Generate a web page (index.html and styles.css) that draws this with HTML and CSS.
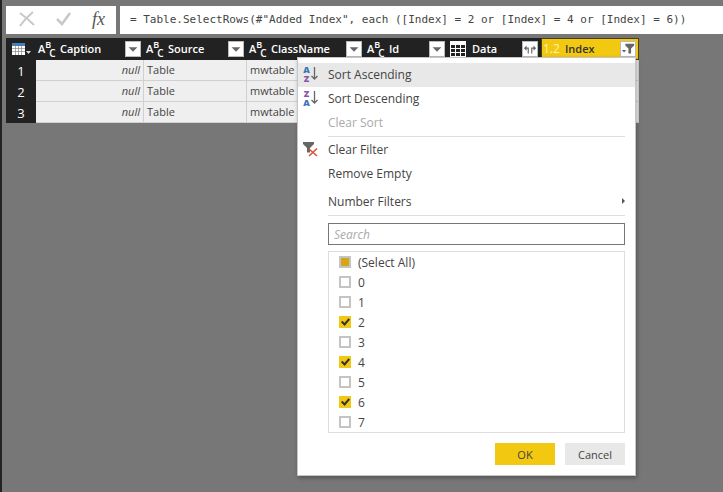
FILE: index.html
```html
<!DOCTYPE html>
<html lang="en">
<head>
  <meta charset="UTF-8" />
  <meta name="viewport" content="width=device-width, initial-scale=1" />
  <title>Query Editor</title>
  <link rel="stylesheet" href="styles.css">
</head>
<body>
  <!-- Shared icons -->
  <svg class="defs" width="0" height="0" aria-hidden="true">
    <symbol id="icon-arrow" viewBox="0 0 16 16">
      <path d="M3 6h10l-5 5z" fill="#666" />
    </symbol>
    <symbol id="icon-down" viewBox="0 0 7 18">
      <path d="M3.500 2v12M0.500 11l3 3 3-3" />
    </symbol>
  </svg>

  <div class="formula-bar">
    <div class="formula-actions">
      <button aria-label="Cancel formula">
        <svg width="16" height="16" viewBox="0 0 16 16"><path d="M1 2C5 5 10 9 15 14M14 1C9 5 5 9 1 15" fill="none" stroke="#c8c8c8" stroke-width="2" /></svg>
      </button>
      <button aria-label="Apply formula">
        <svg width="16" height="16" viewBox="0 0 16 16"><path d="M1 8l5 5L14 2" fill="none" stroke="#c8c8c8" stroke-width="2.6" /></svg>
      </button>
      <button class="fx" aria-label="Insert function">fx</button>
    </div>
    <input class="formula" type="text" aria-label="Formula" value="= Table.SelectRows(#&quot;Added Index&quot;, each ([Index] = 2 or [Index] = 4 or [Index] = 6))">
  </div>

  <div class="grid">
    <table>
      <colgroup>
        <col class="c-num"><col class="c-caption"><col class="c-source"><col class="c-class"><col class="c-id"><col class="c-data"><col class="c-index">
      </colgroup>
      <thead>
        <tr>
          <th>
            <button class="corner" aria-label="Table menu">
              <svg width="20" height="14" viewBox="0 0 20 14">
                <path d="M0 1h13v12H0z" fill="#fff" />
                <path d="M0 1h13v3H0z" fill="#4a7ebb" />
                <path d="M0 6.5h13M0 9.5h13M3.5 4v9M6.5 4v9M9.5 4v9" stroke="#8a8a8a" stroke-width="0.7" />
                <path d="M14 9h5l-2.500 3z" fill="#ddd" />
              </svg>
            </button>
          </th>
          <th><div class="head"><div class="type"><i>A</i><i>B</i><i>C</i></div><span>Caption</span><button class="drop" aria-label="Filter Caption"><svg><use href="#icon-arrow" /></svg></button></div></th>
          <th><div class="head"><div class="type"><i>A</i><i>B</i><i>C</i></div><span>Source</span><button class="drop" aria-label="Filter Source"><svg><use href="#icon-arrow" /></svg></button></div></th>
          <th><div class="head"><div class="type"><i>A</i><i>B</i><i>C</i></div><span>ClassName</span><button class="drop" aria-label="Filter ClassName"><svg><use href="#icon-arrow" /></svg></button></div></th>
          <th><div class="head"><div class="type"><i>A</i><i>B</i><i>C</i></div><span>Id</span><button class="drop" aria-label="Filter Id"><svg><use href="#icon-arrow" /></svg></button></div></th>
          <th>
            <div class="head">
              <svg class="type" viewBox="0 0 17 18"><path d="M0 1h16v16H0z" fill="#fff" /><path d="M1 5h4v3H1zM6 5h4v3H6zM11 5h4v3h-4zM1 9h4v3H1zM6 9h4v3H6zM11 9h4v3h-4zM1 13h4v3H1zM6 13h4v3H6zM11 13h4v3h-4z" fill="#222" /></svg>
              <span>Data</span>
              <button class="drop" aria-label="Expand Data">
                <svg viewBox="0 0 16 16"><path d="M3 7h3v6M13 7h-3v6" fill="none" stroke="#666" stroke-width="1.300" /><path d="M1 7l3-3v6zM15 7l-3-3v6z" fill="#666" /></svg>
              </button>
            </div>
          </th>
          <th class="active">
            <div class="head">
              <b class="decimal">1.2</b>
              <span>Index</span>
              <button class="drop" aria-label="Filter Index">
                <svg viewBox="0 0 16 16"><path d="M5 2h10v2l-3.500 3.500V13H8.500V7.500L5 4z" fill="#666" /><path d="M1 9h5l-2.500 3z" fill="#666" /></svg>
              </button>
            </div>
          </th>
        </tr>
      </thead>
      <tbody>
        <tr><th>1</th><td class="null">null</td><td>Table</td><td>mwtable</td><td></td><td></td><td></td></tr>
        <tr><th>2</th><td class="null">null</td><td>Table</td><td>mwtable</td><td></td><td></td><td></td></tr>
        <tr><th>3</th><td class="null">null</td><td>Table</td><td>mwtable</td><td></td><td></td><td></td></tr>
      </tbody>
    </table>

    <!-- Filter menu of the Index column -->
    <form class="menu">
      <button type="button" class="item hover">
        <span class="icon"><span class="az"><b class="a">A</b><b class="z">Z</b></span><svg width="7" height="18"><use href="#icon-down" /></svg></span>
        Sort Ascending
      </button>
      <button type="button" class="item">
        <span class="icon"><span class="az"><b class="z">Z</b><b class="a">A</b></span><svg width="7" height="18"><use href="#icon-down" /></svg></span>
        Sort Descending
      </button>
      <button type="button" class="item" disabled><span class="icon"></span>Clear Sort</button>
      <hr>
      <button type="button" class="item">
        <span class="icon"><svg width="16" height="18" viewBox="0 0 16 18"><path d="M0 2h11v2L7 8v4.500H4V8L0 4z" class="funnel" /><path d="M6 9l8 7M14 8.500L6 16" class="cross" /></svg></span>
        Clear Filter
      </button>
      <button type="button" class="item"><span class="icon"></span>Remove Empty</button>
      <button type="button" class="item sub"><span class="icon"></span>Number Filters <i></i></button>
      <hr>
      <div class="filter">
        <input class="search" type="text" placeholder="Search" aria-label="Search">
        <div class="values">
          <label><input type="checkbox" class="some">(Select All)</label>
          <label><input type="checkbox">0</label>
          <label><input type="checkbox">1</label>
          <label><input type="checkbox" checked>2</label>
          <label><input type="checkbox">3</label>
          <label><input type="checkbox" checked>4</label>
          <label><input type="checkbox">5</label>
          <label><input type="checkbox" checked>6</label>
          <label><input type="checkbox">7</label>
        </div>
        <div class="buttons">
          <button type="button" class="ok">OK</button>
          <button type="button">Cancel</button>
        </div>
      </div>
    </form>
  </div>

  <script>
    document.querySelector('.some').indeterminate = true;
  </script>
</body>
</html>
```
FILE: styles.css
```css
* {
  box-sizing: border-box;
}
body {
  margin: 0;
  min-height: 100vh;
  padding: 6px 0 0 4px;
  background: #777;
  border-left: 2px solid #222;
  color: #444;
  font-family: 'Open Sans', 'Noto Sans', sans-serif;
  font-size: 12px;
  overflow: hidden;
}
button, input {
  font: inherit;
  color: inherit;
}
button {
  border: none;
  padding: 0;
  background: none;
}
svg {
  display: block;
}
.defs {
  position: absolute;
}

/* Formula bar */
.formula-bar {
  display: flex;
  gap: 4px;
  height: 28px;
}
.formula-actions {
  display: flex;
  flex: 0 0 110px;
  align-items: center;
  justify-content: space-between;
  padding: 0 11px 2px 13px;
  background: #fff;
}
.fx {
  font: italic 18px/20px 'Liberation Serif', serif;
  color: #555;
}
.formula {
  flex: 1;
  min-width: 0;
  border: none;
  padding: 0 10px 2px;
  background: #fff;
  font: 11px 'DejaVu Sans Mono', monospace;
}

/* Data grid */
.grid {
  position: relative;
  width: max-content;
  margin-top: 4px;
}
table {
  table-layout: fixed;
  width: 633px;
  border-spacing: 0;
}
.c-num { width: 30px; }
.c-caption { width: 108px; }
.c-source { width: 103px; }
.c-class { width: 118px; }
.c-id { width: 83px; }
.c-data { width: 93px; }
.c-index { width: 98px; }

th {
  height: 22px;
  padding: 0;
  background: #222;
  color: #fff;
}
th.active {
  background: #f2c811;
  color: #333;
  box-shadow: inset 0 0 0 1px #4a3f10;
}
tbody th {
  height: 21px;
  font-size: 13px;
  font-weight: 400;
  line-height: 18px;
}
td {
  height: 21px;
  padding: 0 3px;
  background: #efefef;
  border-right: 1px solid #d0d0d0;
  border-bottom: 1px solid #d0d0d0;
  font-size: 11px;
  line-height: 16px;
}
.null {
  text-align: right;
  font-style: italic;
}
.corner {
  display: block;
  margin-left: 6px;
}
.head {
  display: flex;
  align-items: center;
  padding: 0 3px 0 2px;
  font-size: 11px;
  font-weight: 600;
  line-height: 18px;
  text-align: left;
}
.head span {
  flex: 1;
  padding-left: 5px;
}
.type {
  display: flex;
  align-items: center;
  width: 17px;
  height: 18px;
}
.type i {
  font-size: 11px;
  font-style: normal;
  line-height: 12px;
}
.type i:nth-child(2) {
  align-self: flex-start;
  font-size: 9px;
  line-height: 9px;
}
.type i:nth-child(3) {
  align-self: flex-end;
  margin-left: -2px;
  font-size: 10px;
  line-height: 10px;
}
.decimal {
  width: 17px;
  color: #fff3b0;
  font-size: 12px;
  font-weight: 400;
}
.drop {
  width: 16px;
  height: 16px;
  background: #fff;
  border: 1px solid #bbb;
}
.drop svg {
  width: 14px;
  height: 14px;
}

/* Filter menu */
.menu {
  position: absolute;
  top: 19px;
  right: 3px;
  width: 339px;
  padding: 5px 0 10px;
  background: #fff;
  border: 1px solid #c6c6c6;
  box-shadow: 1px 2px 4px rgba(0,0,0,0.3);
}
.item {
  display: flex;
  align-items: center;
  width: 100%;
  height: 24px;
  padding: 0 10px 2px 5px;
}
.item.hover {
  background: #e8e8e8;
}
.item:disabled {
  color: #aaa;
}
.icon {
  display: flex;
  flex: 0 0 25px;
  gap: 1px;
}
.icon svg {
  fill: none;
  stroke: #666;
  stroke-width: 1.3;
}
.az {
  width: 7px;
  font-size: 9px;
  font-weight: 600;
  line-height: 9px;
}
.az b {
  display: block;
}
.az .a {
  color: #3d75b8;
}
.az .z {
  color: #8a55a8;
}
.icon .funnel {
  fill: #666;
  stroke: none;
}
.icon .cross {
  stroke: #d4553a;
  stroke-width: 1.6;
}
.item.sub {
  margin-top: 4px;
}
.item i {
  margin-left: auto;
  border: 3px solid transparent;
  border-left-color: #555;
  border-right: none;
}
.menu hr {
  margin: 1px 10px 1px 30px;
  border: none;
  border-top: 1px solid #ddd;
}
.filter {
  padding: 6px 10px 0 30px;
}
.search {
  display: block;
  width: 100%;
  height: 22px;
  padding: 0 5px;
  border: 1px solid #777;
}
.search::placeholder {
  color: #aaa;
  font-style: italic;
}
.values {
  margin-top: 6px;
  padding-left: 10px;
  border: 1px solid #ddd;
}
.values label {
  display: flex;
  align-items: center;
  gap: 7px;
  height: 20px;
}
.values input {
  appearance: none;
  width: 12px;
  height: 12px;
  margin: 0;
  border: 2px solid #c4c4c4;
  background: #fff;
}
.values input:indeterminate {
  background: #d4a514;
}
.values input:checked {
  border: none;
  background: #f2c811;
}
.values input:checked::before {
  content: "";
  display: block;
  width: 3px;
  height: 6px;
  margin: 1px 0 0 4px;
  border: solid #333;
  border-width: 0 2px 2px 0;
  transform: rotate(42deg);
}
.buttons {
  display: flex;
  justify-content: flex-end;
  gap: 10px;
  margin-top: 10px;
}
.buttons button {
  width: 60px;
  height: 22px;
  background: #e8e8e8;
  font-size: 11px;
}
.buttons .ok {
  background: #f2c811;
}
```
